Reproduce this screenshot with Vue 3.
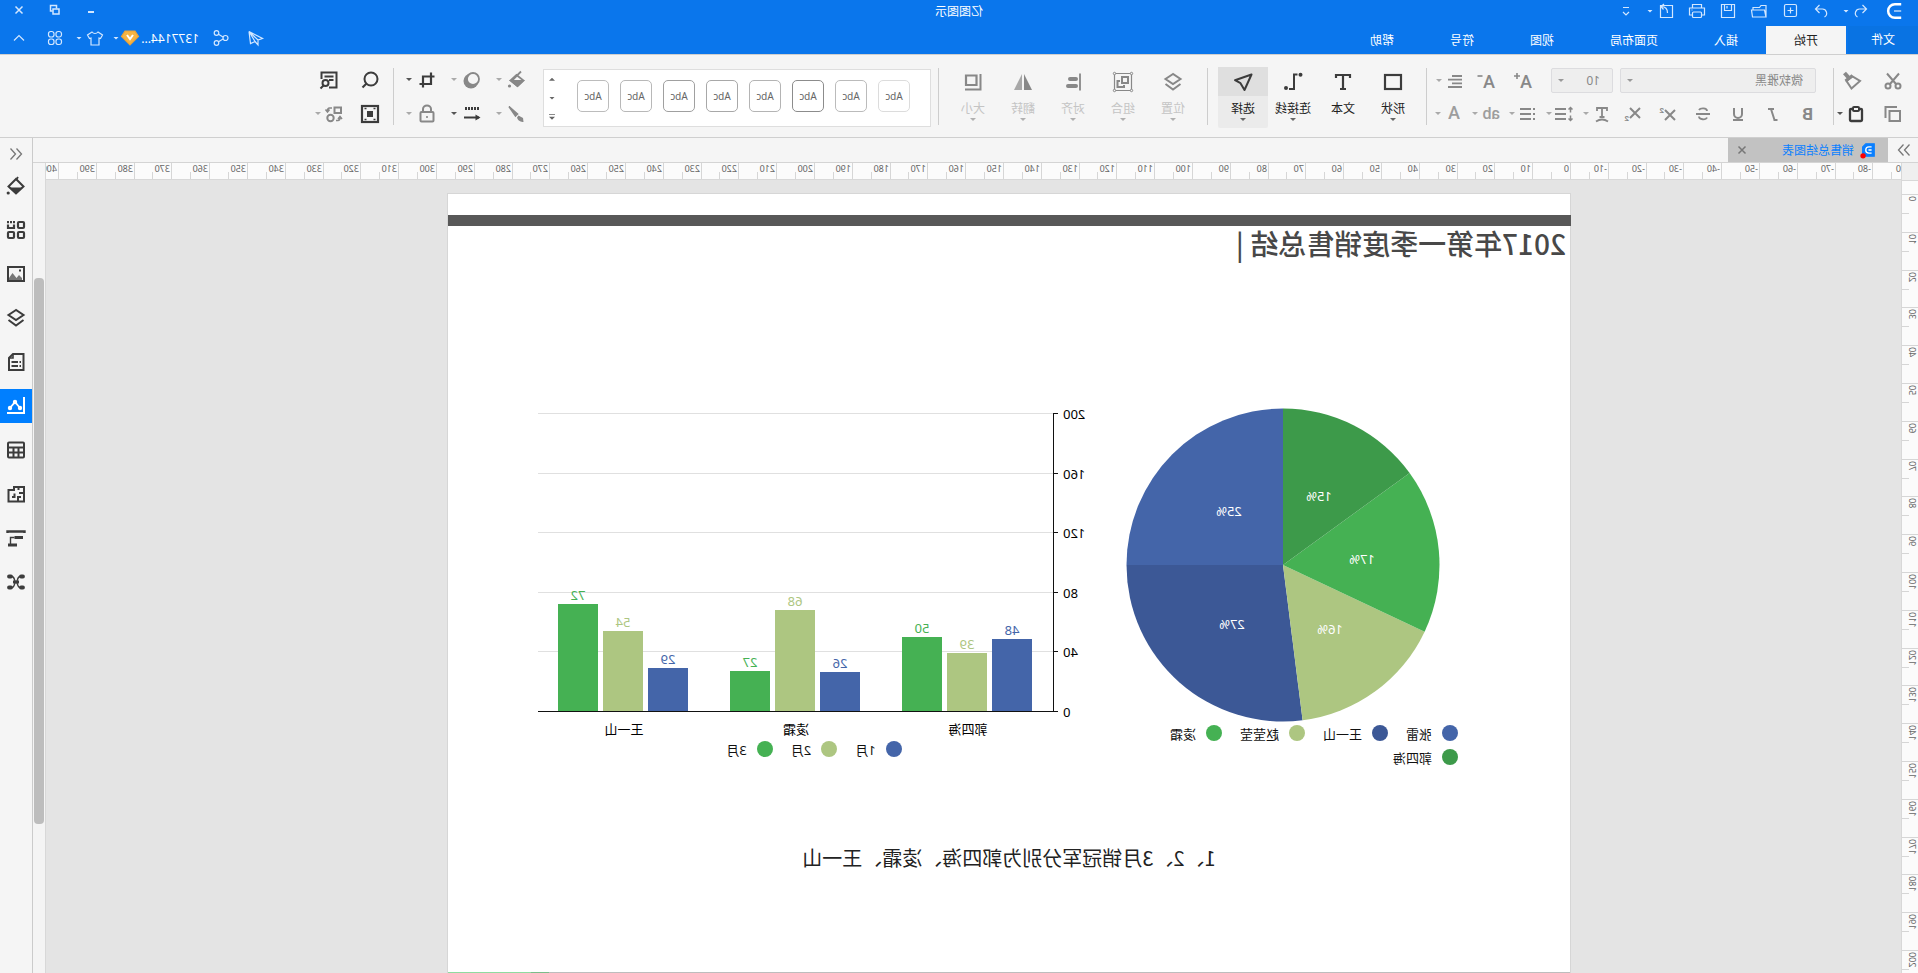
<script setup>
import { ref } from 'vue'

const icons = {
  logo: '<path d="M2 2.500h7a7.500 7.500 0 0 1 0 15H2" stroke-width="2.800"/><path d="M2 10h8" stroke-width="2" opacity=".6"/>',
  undo: '<path d="M8.500 4L4.500 8l4 4M4.500 8H11a4.300 4.300 0 0 1 2.500 8"/>',
  redo: '<path d="M11.500 4l4 4-4 4M15.500 8H9a4.300 4.300 0 0 0-2.500 8"/>',
  plus: '<rect x="3.500" y="3.500" width="12" height="12" rx="1.500"/><path d="M9.500 6.500v6M6.500 9.500h6"/>',
  folder: '<path d="M3 16V4.500h5l1.500 2H16V9M3 16l1.500-7H17.500l-1 7z"/>',
  save: '<path d="M3.500 3.500h13v13h-13zM6.500 3.500v6h7v-6M11 5v2.500"/>',
  print: '<path d="M5.500 7V3.500h9V7M5.500 14h-3V7h15v7h-3"/><rect x="5.500" y="11" width="9" height="5.500" rx="1"/><path d="M14.500 9h1"/>',
  exportIcon: '<path d="M9 4.500H3.500v12h12V12M8.500 12c0-4 2-6.500 6-6.500M12 3l3 2.500L12.500 8.500M9 4.500h6.500V12"/>',
  custom: '<path d="M7 6.500h6M7 11l3 3 3-3"/>',
  min: '<path d="M7 12h6" stroke-width="2"/>',
  restore: '<path d="M6 9h6v5H6z" stroke-width="1.500"/><path d="M8.500 8.500V5.500h6V11H12.500" stroke-width="1.500"/>',
  close: '<path d="M6.500 6.500l7 7M13.500 6.500l-7 7" stroke-width="1.500"/>',
  send: '<path d="M17 3.500L3.500 10.500l4.500 1.500zM17 3.500L15.500 15.500 11 13.500zM8 12v5l3-3.500"/>',
  share: '<circle cx="5.500" cy="10" r="2.500"/><circle cx="14.500" cy="5" r="2.300"/><circle cx="14.500" cy="15" r="2.300"/><path d="M8 9l4.500-2.800M8 11l4.500 2.800"/>',
  gem: '<path d="M5 3h10l3.500 5.500L10 17 1.500 8.500z" fill="#f6b443" stroke="#e9a238"/><path d="M7 7l3 4 3-4" stroke="#fff" stroke-width="2"/>',
  shirt: '<path d="M7 4L2.500 7l2 3.500L6 10v7h8v-7l1.500.500 2-3.500L13 4c-1.500 2-4.500 2-6 0z"/>',
  clover: '<rect x="3.500" y="3.500" width="5.500" height="5.500" rx="2.200"/><rect x="11" y="3.500" width="5.500" height="5.500" rx="2.200"/><rect x="3.500" y="11" width="5.500" height="5.500" rx="2.200"/><rect x="11" y="11" width="5.500" height="5.500" rx="2.200"/>',
  up: '<path d="M5 12.500L10 7.500l5 5"/>',
  cut: '<path d="M4 2.500l9 10.500M16 2.500L7 13" stroke-width="2"/><circle cx="5" cy="15" r="2.500" stroke-width="2"/><circle cx="15" cy="15" r="2.500" stroke-width="2"/>',
  painter: '<path d="M17.500 2l-4 4.500" stroke-width="4"/><path d="M9.500 5.500l6 4.500-5 7.500L2 10z" stroke-width="2"/><path d="M9.500 4.500l7 5.500" stroke-width="3"/>',
  copy: '<rect x="3" y="7" width="10.500" height="10" stroke-width="2"/><path d="M6 3h11.500v11" stroke-width="2"/>',
  paste: '<rect x="4" y="5" width="12" height="12" rx="1" stroke-width="2.300"/><rect x="7" y="3" width="6" height="4" rx="1" stroke-width="2" fill="#f5f5f5"/>',
  fontUp: '<text x="2" y="17" font-size="18" font-weight="500">A</text><path d="M14 5h6M17 2v6" stroke-width="1.600"/>',
  fontDown: '<text x="2" y="17" font-size="18" font-weight="500">A</text><path d="M14.500 5h5" stroke-width="1.600"/>',
  align: '<path d="M3 5h10M3 8.700h14M3 12.300h10M3 16h14" stroke-width="1.800"/>',
  bold: '<text x="5" y="16" font-size="17" font-weight="700">B</text>',
  italic: '<path d="M9 5h6M12 5L8.500 16M5.500 16h4" stroke-width="2"/>',
  under: '<path d="M6 4v6a4 4 0 0 0 8 0V4M5 16h10" stroke-width="2"/>',
  strike: '<path d="M14 6c-1-2-8-2.500-8 1M6 13.500c1 2.500 8 2.500 8-1M3 10h14" stroke-width="1.800"/>',
  sup: '<path d="M3 6l10 10M13 6L3 16" stroke-width="2"/><text x="14" y="9" font-size="8" font-weight="700">2</text>',
  sub: '<path d="M3 4l10 10M13 4L3 14" stroke-width="2"/><text x="14" y="17" font-size="8" font-weight="700">2</text>',
  textT: '<path d="M5 7V4h10v3M10 4v9M7.500 13h5M4 17.500q6-4 12 0" stroke-width="1.800"/>',
  spacing: '<path d="M9 5h11M9 10h11M9 15h11" stroke-width="2"/><path d="M4.500 3.500v5M2.500 5.500l2-2 2 2M4.500 16.500v-5M2.500 14.500l2 2 2-2" stroke-width="1.500"/>',
  list: '<path d="M7 5h11M7 10h11M7 15h11" stroke-width="2"/><path d="M3 5h2M3 10h2M3 15h2" stroke-width="2"/>',
  ab: '<text x="1" y="15" font-size="16" font-weight="500" opacity=".8">ab</text>',
  colorA: '<text x="4" y="15" font-size="18" font-weight="500" opacity=".8">A</text>',
  shape: '<rect x="2" y="3" width="16" height="14" stroke-width="2.200"/>',
  text: '<path d="M3 6V3h14v3M10 3v14M7 17h6" stroke-width="2.200"/>',
  connector: '<path d="M5.500 2.500H9V17h5" stroke-width="2"/><circle cx="2.500" cy="2.800" r="2" fill="currentColor" stroke="none"/><circle cx="17" cy="16" r="2" fill="currentColor" stroke="none"/>',
  select: '<path d="M1.500 2.500L18 8.200l-5.500 3L8.500 18z" stroke-width="2" stroke-linejoin="round"/>',
  position: '<path d="M10 2l7.500 5-7.500 5-7.500-5z" stroke-width="2"/><path d="M2.500 12l7.500 5.500 7.500-5.500" stroke-width="2"/>',
  group: '<path d="M1.500 1.500h17v17h-17z" stroke-width="1.200"/><g fill="#f5f5f5" stroke-width="1"><circle cx="1.500" cy="1.500" r="1.200"/><circle cx="18.500" cy="1.500" r="1.200"/><circle cx="1.500" cy="18.500" r="1.200"/><circle cx="18.500" cy="18.500" r="1.200"/></g><path d="M5 5h6v6H5zM13 9h2.500v6H9v-2" stroke-width="2"/>',
  alignObj: '<path d="M3 1.500v17" stroke-width="1.800"/><path d="M7 7h6M7 14h8" stroke-width="4" stroke-linecap="round"/>',
  flip: '<path d="M9 2v16H1z" fill="currentColor" stroke="none"/><path d="M11 2v16h8z" fill="currentColor" stroke="none" opacity=".7"/>',
  size: '<path d="M6.500 3.500h10.500v9.500H6.500z" stroke-width="2.200"/><path d="M2.500 2v15.500H18" stroke-width="2"/>',
  fill: '<path d="M6 1.500l9 9" stroke-width="1.800"/><path d="M10.500 5l6 5.500L9.500 16 3.500 10.500z" stroke-width="1.800"/><path d="M3.500 10.500h13L9.500 16.500z" fill="currentColor"/><circle cx="17.500" cy="16" r="1.600" fill="currentColor" stroke="none"/>',
  bucket: '<path d="M8 1l2 3" stroke-width="1.800"/><path d="M10 3l7.500 7.500-7.500 7L2.500 10.500z" stroke-width="2"/><path d="M4.500 12h11L10 17.500z" fill="currentColor"/><circle cx="17.800" cy="17" r="1.600" fill="currentColor" stroke="none"/>',
  pen: '<path d="M18 2.500L9.500 10l2 2z" fill="currentColor" stroke-width="1.600"/><path d="M8.500 11.500l-4.500 2.500-.500 4c2.500 0 5.500-1 6.500-4.500z" fill="currentColor" stroke="none"/>',
  ring: '<circle cx="11" cy="11" r="7.500" fill="currentColor" stroke="none"/><circle cx="9" cy="9" r="6" fill="#f5f5f5" stroke-width="1.800"/>',
  crop: '<path d="M14 17.500V6.500H2.500M17.500 14H6V2.500" stroke-width="2.200"/>',
  lines: '<path d="M3 4.500h15" stroke-width="3" stroke-dasharray="2 1"/><path d="M3 13.500h15" stroke-width="2"/><path d="M6.500 10.500v6L1.500 13.500z" fill="currentColor" stroke="none"/>',
  lock: '<rect x="3.500" y="8" width="13" height="9.500" rx="1" stroke-width="2"/><path d="M6 8V5a4 3.500 0 0 1 8 0v3" stroke-width="2"/><path d="M10 12v2" stroke-width="1.600"/>',
  search: '<circle cx="9" cy="9" r="6.500" stroke-width="2"/><path d="M13.500 13.500l4 4" stroke-width="2.200"/>',
  findDoc: '<path d="M10 17.500H2.500v-15h15V9M5.500 6.500h9M5.500 10H10" stroke-width="2"/><circle cx="13.500" cy="13" r="3" stroke-width="2"/><path d="M15.500 15.500l3 3" stroke-width="2"/>',
  fit: '<rect x="2" y="2" width="16" height="16" stroke-width="2.200"/><path d="M7 7h6v6H7z" fill="currentColor" stroke="none"/><path d="M4.500 4.500h2M13.500 4.500h2M4.500 15.500h2M13.500 15.500h2" stroke-width="1.500"/>',
  convert: '<path d="M3 3.500h6.500V9H3z" stroke-width="2"/><circle cx="13.500" cy="14" r="3.200" stroke-width="2"/><path d="M12 4h2.500c1.500 0 2 1 2 3M14.500 5.500l2 2.500 2-2.500M8 16.500H6c-1.500 0-2-1-2-3M2 15l2-2.500L6 15" stroke-width="1.600"/>',
  left2: '<path d="M9.500 4.500L4.500 10l5 5.500M15.500 4.500l-5 5.500 5 5.500" stroke-width="1.300"/>',
  right2: '<path d="M4.500 4.500l5 5.500-5 5.500M10.500 4.500l5 5.500-5 5.500" stroke-width="1.300"/>',
  doc: '<path d="M3 3h9.500l3.500 3.500V17H3z" fill="#0a7fff" stroke="#0a7fff"/><path d="M6 6.500h3a3.300 3.300 0 0 1 0 7H6M6 10h3.500" stroke="#fff" stroke-width="1.500"/><circle cx="15.500" cy="16.500" r="3" fill="#f00" stroke="none"/>',
  squares: '<g stroke-width="2.200"><rect x="2" y="2" width="6" height="6" rx="1"/><path d="M12 4.500V8h6V4.500"/><path d="M11 2.200h2M14 2.200h2M17 2.200h2"/><rect x="2" y="12" width="6" height="6" rx="1"/><rect x="12" y="12" width="6" height="6" rx="1"/></g>',
  image: '<rect x="2" y="3" width="16" height="14" stroke-width="2"/><path d="M4 16v-2l3-3 2.500 3 4-5 3.500 5v2z" fill="#777" stroke="none"/><path d="M5 6.500h2" stroke-width="1.800"/>',
  page: '<path d="M2.500 2h10.500l4 4v12H2.500z" stroke-width="2"/><path d="M13 2v4h4" stroke-width="1.600"/><path d="M5 10h1.500M8 10h6.500M5 14h1.500M8 14h6.500" stroke-width="1.800"/>',
  chart: '<path d="M2 1v16h17" stroke-width="2"/><path d="M6 12l5-6 5 6" stroke-width="1.800"/><g fill="currentColor" stroke="none"><circle cx="6" cy="12" r="2.200"/><circle cx="11" cy="6" r="2.200"/><circle cx="16" cy="12" r="2.200"/></g>',
  table: '<rect x="2" y="2.500" width="16" height="15" rx="1" stroke-width="2"/><path d="M2 7.500h16M2 12.500h16M7.500 7.500v10M12.500 7.500v10" stroke-width="2"/>',
  plan: '<path d="M2 3h10v3h5.500v11.500H2zM2 9h5M7.500 3v3M8 12v5.500M11.500 9.500V13H14M5 13h3" stroke-width="2"/>',
  gantt: '<path d="M1.500 5V3.500h17V5" stroke-width="2.400"/><path d="M3 9.500h8.500M9 17h9" stroke-width="2.800"/><path d="M11.500 9.500h4v7" stroke-width="1.400"/>',
  mind: '<g stroke-width="3.800" stroke-linecap="round"><path d="M3 4.500h2M15 4.500h2M3 15.500h2M15 15.500h2"/></g><path d="M6 4.500c3 0 2 5.500 4 5.500s1-5.500 4-5.500M6 15.500c3 0 2-5.500 4-5.500s1 5.500 4 5.500" stroke-width="1.400"/><path d="M7 10h6" stroke-width="3"/>',
}

const menu = ['插入', '页面布局', '视图', '符号', '帮助']
const quick = [
  ['plus', '新建'], ['folder', '打开'], ['save', '保存'], ['print', '打印'],
]
const tools = [
  ['shape', '形状', true], ['text', '文本', false], ['connector', '连接线', true], ['select', '选择', true],
]
const arrange = [
  ['position', '位置'], ['group', '组合'], ['alignObj', '对齐'], ['flip', '翻转'], ['size', '大小'],
]
const formats = [
  ['bold', '加粗'], ['italic', '斜体'], ['under', '下划线'], ['strike', '删除线'], ['sup', '上标'], ['sub', '下标'],
]
const formatMenus = [
  ['textT', '文字方向'], ['spacing', '行距'], ['list', '项目符号'], ['ab', '突出显示'], ['colorA', '字体颜色'],
]
const presets = ['#dcdcdc', '#bbbbbb', '#8c8c8c', '#b4b4b4', '#a8a8a8', '#a0a0a0', '#b8b8b8', '#bcbcbc']
const side = [
  ['bucket', '填充'], ['squares', '符号库'], ['image', '图片'], ['position', '图层'], ['page', '页面'],
  ['chart', '图表'], ['table', '表格'], ['plan', '平面图'], ['gantt', '甘特图'], ['mind', '思维导图'],
]
const activeSide = ref('chart')
const font = ref('微软雅黑')
const fontSize = ref('10')

const PITCH = 37.8
const hTicks = Array.from({ length: 50 }, (_, i) => (i - 9) * 10).map(v => ({ v, x: Math.round(330 + v / 10 * PITCH) }))
const vTicks = Array.from({ length: 21 }, (_, i) => i * 10).map(v => ({ v, y: Math.round(13 + v / 10 * PITCH) }))

const people = [
  { name: '张雷', pct: 25, color: '#4465a9', x: 229, y: 104 },
  { name: '王一山', pct: 27, color: '#3c5896', x: 226, y: 217 },
  { name: '赵莹莹', pct: 16, color: '#adc681', x: 128, y: 222 },
  { name: '凌霜', pct: 17, color: '#45b153', x: 96, y: 152 },
  { name: '郭四海', pct: 15, color: '#3d9a4a', x: 139, y: 89 },
]
const CX = 175, CY = 158, R = 156.5
let acc = 0
const slices = people.map(p => {
  const at = t => {
    const a = t / 100 * Math.PI * 2
    return `${(CX + R * Math.sin(a)).toFixed(2)} ${(CY - R * Math.cos(a)).toFixed(2)}`
  }
  const d = `M${CX} ${CY}L${at(acc)}A${R} ${R} 0 0 1 ${at(acc + p.pct)}Z`
  acc += p.pct
  return { ...p, d }
})

const months = [
  { name: '1月', color: '#4465a9' }, { name: '2月', color: '#adc681' }, { name: '3月', color: '#45b153' },
]
const sales = [
  { name: '郭四海', values: [48, 39, 50] },
  { name: '凌霜', values: [26, 68, 27] },
  { name: '王一山', values: [29, 54, 72] },
]
const BASE = 304, UNIT = 1.49, AX = 40
const levels = [0, 40, 80, 120, 160, 200].map(v => ({ v, y: Math.round(BASE - v * UNIT) + 0.5 }))
const bars = sales.flatMap((s, i) => s.values.map((v, j) => ({
  v, color: months[j].color, x: AX + i * 172 + 22 + j * 45, y: Math.round(BASE - v * UNIT), h: Math.round(v * UNIT),
})))
</script>

<template>
  <div class="app">
    <header class="top">
      <div class="titlebar">
        <div class="quick">
          <svg class="ic logo" viewBox="0 0 20 20" v-html="icons.logo" />
          <button class="ib undo" aria-label="撤销"><svg class="ic" viewBox="0 0 20 20" v-html="icons.undo" /></button>
          <i class="caret" />
          <button class="ib redo" aria-label="重做"><svg class="ic" viewBox="0 0 20 20" v-html="icons.redo" /></button>
          <button v-for="q in quick" :key="q[0]" class="ib q" :aria-label="q[1]"><svg class="ic" viewBox="0 0 20 20" v-html="icons[q[0]]" /></button>
          <button class="ib q" aria-label="导出"><svg class="ic" viewBox="0 0 20 20" v-html="icons.exportIcon" /></button>
          <i class="caret" />
          <button class="ib q" aria-label="自定义"><svg class="ic" viewBox="0 0 20 20" v-html="icons.custom" /></button>
        </div>
        <span class="appname">亿图图示</span>
        <div class="win">
          <button class="ib" aria-label="最小化"><svg class="ic" viewBox="0 0 20 20" v-html="icons.min" /></button>
          <button class="ib" aria-label="还原"><svg class="ic" viewBox="0 0 20 20" v-html="icons.restore" /></button>
          <button class="ib" aria-label="关闭"><svg class="ic" viewBox="0 0 20 20" v-html="icons.close" /></button>
        </div>
      </div>
      <nav class="menubar">
        <button class="file">文件</button>
        <button class="tab on">开始</button>
        <button v-for="m in menu" :key="m" class="tab">{{ m }}</button>
        <div class="account">
          <button class="ib" aria-label="发送"><svg class="ic" viewBox="0 0 20 20" v-html="icons.send" /></button>
          <button class="ib share" aria-label="分享"><svg class="ic" viewBox="0 0 20 20" v-html="icons.share" /></button>
          <button class="user">1377144...</button>
          <svg class="ic" viewBox="0 0 20 20" v-html="icons.gem" />
          <i class="caret" />
          <button class="ib shirt" aria-label="主题"><svg class="ic" viewBox="0 0 20 20" v-html="icons.shirt" /></button>
          <i class="caret" />
          <button class="ib clover" aria-label="应用"><svg class="ic" viewBox="0 0 20 20" v-html="icons.clover" /></button>
          <button class="ib fold" aria-label="收起"><svg class="ic" viewBox="0 0 20 20" v-html="icons.up" /></button>
        </div>
      </nav>
    </header>

    <section class="ribbon">
      <div class="rows clip">
        <div class="row cliprow1">
          <button class="ib" aria-label="剪切"><svg class="ic" viewBox="0 0 20 20" v-html="icons.cut" /></button>
          <button class="ib" aria-label="格式刷"><svg class="ic" viewBox="0 0 20 20" v-html="icons.painter" /></button>
        </div>
        <div class="row cliprow2">
          <button class="ib" aria-label="复制"><svg class="ic" viewBox="0 0 20 20" v-html="icons.copy" /></button>
          <button class="ib drop dark" aria-label="粘贴"><svg class="ic" viewBox="0 0 20 20" v-html="icons.paste" /><i class="caret" /></button>
        </div>
      </div>
      <i class="sep" />
      <div class="rows font">
        <div class="row r1">
          <label class="pick family"><select v-model="font" aria-label="字体"><option>微软雅黑</option></select><i class="caret" /></label>
          <label class="pick num"><select v-model="fontSize" aria-label="字号"><option>10</option></select><i class="caret" /></label>
          <div class="fontbtns">
            <button class="ib" aria-label="增大字号"><svg class="ic" viewBox="0 0 20 20" v-html="icons.fontUp" /></button>
            <button class="ib" aria-label="减小字号"><svg class="ic" viewBox="0 0 20 20" v-html="icons.fontDown" /></button>
          </div>
          <button class="ib drop" aria-label="对齐方式"><svg class="ic" viewBox="0 0 20 20" v-html="icons.align" /><i class="caret" /></button>
        </div>
        <div class="row r2">
          <div class="marks">
            <button v-for="f in formats" :key="f[0]" class="ib" :aria-label="f[1]"><svg class="ic" viewBox="0 0 20 20" v-html="icons[f[0]]" /></button>
          </div>
          <div class="markmenus">
            <button v-for="f in formatMenus" :key="f[0]" class="ib drop" :aria-label="f[1]"><svg class="ic" viewBox="0 0 20 20" v-html="icons[f[0]]" /><i class="caret" /></button>
          </div>
        </div>
      </div>
      <i class="sep" />
      <div class="bigs">
        <button v-for="t in tools" :key="t[0]" class="big" :class="{ picked: t[0] === 'select' }">
          <span class="pic"><svg class="ic" viewBox="0 0 20 20" v-html="icons[t[0]]" /></span>
          <span class="cap">{{ t[1] }}</span>
          <i v-if="t[2]" class="caret" />
        </button>
      </div>
      <i class="sep" />
      <div class="bigs off">
        <button v-for="t in arrange" :key="t[0]" class="big">
          <span class="pic"><svg class="ic" viewBox="0 0 20 20" v-html="icons[t[0]]" /></span>
          <span class="cap">{{ t[1] }}</span>
          <i class="caret" />
        </button>
      </div>
      <i class="sep" />
      <div class="gallery">
        <button v-for="(c, i) in presets" :key="i" class="preset" :style="{ borderColor: c }">Abc</button>
        <div class="spin">
          <button aria-label="上一行"><i class="caret flipup" /></button>
          <button aria-label="下一行"><i class="caret" /></button>
          <button aria-label="更多样式"><i class="caret more" /></button>
        </div>
      </div>
      <div class="rows style">
        <div class="row">
          <button class="ib drop" aria-label="填充"><svg class="ic" viewBox="0 0 20 20" v-html="icons.fill" /><i class="caret" /></button>
          <button class="ib drop" aria-label="阴影"><svg class="ic" viewBox="0 0 20 20" v-html="icons.ring" /><i class="caret" /></button>
          <button class="ib drop dark" aria-label="裁剪"><svg class="ic" viewBox="0 0 20 20" v-html="icons.crop" /><i class="caret" /></button>
        </div>
        <div class="row">
          <button class="ib drop" aria-label="线条"><svg class="ic" viewBox="0 0 20 20" v-html="icons.pen" /><i class="caret" /></button>
          <button class="ib drop dark" aria-label="线型"><svg class="ic" viewBox="0 0 20 20" v-html="icons.lines" /><i class="caret" /></button>
          <button class="ib drop" aria-label="锁定"><svg class="ic" viewBox="0 0 20 20" v-html="icons.lock" /><i class="caret" /></button>
        </div>
      </div>
      <i class="sep" />
      <div class="rows find">
        <div class="row f1">
          <button class="ib dark" aria-label="查找"><svg class="ic" viewBox="0 0 20 20" v-html="icons.search" /></button>
          <button class="ib dark" aria-label="页面查找"><svg class="ic" viewBox="0 0 20 20" v-html="icons.findDoc" /></button>
        </div>
        <div class="row f2">
          <button class="ib dark" aria-label="适合窗口"><svg class="ic" viewBox="0 0 20 20" v-html="icons.fit" /></button>
          <button class="ib drop" aria-label="替换形状"><svg class="ic" viewBox="0 0 20 20" v-html="icons.convert" /><i class="caret" /></button>
        </div>
      </div>
    </section>

    <div class="body">
      <main class="work">
        <div class="docs">
          <button class="ib expand" aria-label="展开"><svg class="ic" viewBox="0 0 20 20" v-html="icons.right2" /></button>
          <div class="doctab">
            <svg class="ic" viewBox="0 0 20 20" v-html="icons.doc" />
            <a href="#">销售总结图表</a>
            <button class="ib" aria-label="关闭文档"><svg class="ic" viewBox="0 0 20 20" v-html="icons.close" /></button>
          </div>
        </div>
        <div class="stage">
          <div class="corner" />
          <svg class="hruler">
            <g v-for="t in hTicks" :key="t.v">
              <path :d="`M${t.x + 0.5} 0V16M${t.x + 19.5} 9V16`" />
              <text :x="t.x + 2" y="9">{{ t.v }}</text>
            </g>
          </svg>
          <div class="cap-end" />
          <svg class="vruler">
            <g v-for="t in vTicks" :key="t.v">
              <path :d="`M0 ${t.y + 0.5}H16M9 ${t.y + 19.5}H16`" />
              <text :transform="`translate(9 ${t.y + 2}) rotate(-90)`" text-anchor="end">{{ t.v }}</text>
            </g>
          </svg>
          <div class="canvas">
            <article class="sheet">
              <div class="band" />
              <h1>2017年第一季度销售总结 |</h1>
              <div class="charts">
                <figure class="pie">
                  <svg width="350" height="314">
                    <path v-for="s in slices" :key="s.name" :d="s.d" :fill="s.color" />
                    <text v-for="s in slices" :key="s.pct" :x="s.x" :y="s.y + 5" text-anchor="middle">{{ s.pct }}%</text>
                  </svg>
                  <ul class="legend">
                    <li v-for="p in people" :key="p.name"><i :style="{ background: p.color }" />{{ p.name }}</li>
                  </ul>
                </figure>
                <figure class="cols">
                  <svg width="560" height="332">
                    <g v-for="l in levels" :key="l.v">
                      <path v-if="l.v" class="grid" :d="`M40 ${l.y}H556`" />
                      <path class="axis" :d="`M36 ${l.y}H41`" />
                      <text x="31" :y="l.y + 5" text-anchor="end">{{ l.v }}</text>
                    </g>
                    <g v-for="b in bars" :key="b.x">
                      <rect :x="b.x" :y="b.y" width="40" :height="b.h" :fill="b.color" />
                      <text :x="b.x + 20" :y="b.y - 4" :fill="b.color" text-anchor="middle">{{ b.v }}</text>
                    </g>
                    <path class="axis" d="M40.500 6V304.500H556" />
                    <text v-for="(s, i) in sales" :key="s.name" :x="126 + i * 172" y="327" text-anchor="middle">{{ s.name }}</text>
                  </svg>
                  <ul class="legend">
                    <li v-for="m in months" :key="m.name"><i :style="{ background: m.color }" />{{ m.name }}</li>
                  </ul>
                </figure>
              </div>
              <p>1、2、3月销冠军分别为郭四海、凌霜、王一山</p>
              <div class="next"><i class="n1" /><i class="n2" /></div>
            </article>
          </div>
          <div class="scroll"><div class="thumb" /></div>
        </div>
      </main>
      <aside class="side">
        <button class="collapse" aria-label="收起面板"><svg class="ic" viewBox="0 0 20 20" v-html="icons.left2" /></button>
        <button v-for="s in side" :key="s[0]" class="panel" :class="{ active: activeSide === s[0] }" :aria-label="s[1]" @click="activeSide = s[0]">
          <svg class="ic" viewBox="0 0 20 20" v-html="icons[s[0]]" />
        </button>
      </aside>
    </div>
  </div>
</template>

<style>
body { margin: 0; overflow: hidden; }
</style>

<style scoped>
.app {
  height: 100vh; display: flex; flex-direction: column; background: #f5f5f5; overflow: hidden;
  font-family: "Noto Sans", "Noto Sans CJK SC", sans-serif; font-size: 12px; color: #333;
  transform: scaleX(-1);
}
* { box-sizing: border-box; }
button { border: 0; background: none; padding: 0; margin: 0; font: inherit; color: inherit; }
.ic { width: 20px; height: 20px; display: block; flex: none; fill: none; stroke: currentColor; stroke-width: 1.2; overflow: visible; }
.ic :deep(text) { fill: currentColor; stroke: none; font-family: Roboto, "Liberation Sans", sans-serif; }
.ib { display: flex; align-items: center; height: 20px; flex: none; }
.caret { display: block; width: 6px; height: 3px; flex: none; background: currentColor; clip-path: polygon(0 0, 100% 0, 50% 100%); }

.top { background: #0a76ec; color: #d3e7ff; flex: none; }
.titlebar { height: 26px; display: grid; grid-template-columns: 1fr auto 1fr; }
.quick { display: flex; align-items: center; padding-left: 15px; height: 22px; }
.logo { width: 18px; height: 18px; color: #fff; }
.undo { margin-left: 14px; }
.undo + .caret { margin-left: 2px; }
.redo { margin-left: 12px; }
.q { margin-left: 11px; }
.q + .caret { margin-left: 3px; }
.appname { color: #fff; line-height: 23px; }
.win { display: flex; align-items: center; justify-content: flex-end; height: 20px; gap: 16px; padding-right: 9px; }
.menubar { display: flex; align-items: stretch; height: 28px; color: #fff; }
.file { width: 70px; margin-right: 2px; background: #0973e3; line-height: 26px; }
.tab { padding: 0 28px; }
.tab.on { background: #f5f5f5; color: #222; }
.account { margin-left: auto; display: flex; align-items: center; padding-right: 9px; height: 24px; color: #d3e7ff; }
.share { margin: 0 12px 0 15px; }
.user { width: 59px; text-align: left; color: #fff; }
.account .caret { margin-left: 1px; }
.shirt { margin-left: 8px; }
.shirt + .caret { margin-left: 3px; }
.clover { margin: 0 16px 0 11px; }

.ribbon { height: 84px; flex: none; display: flex; align-items: flex-start; border: solid #cfcfcf; border-width: 1px 0; color: #888; }
.sep { width: 1px; height: 57px; margin-top: 13px; background: #cdcdcd; flex: none; }
.rows { padding-top: 9px; flex: none; }
.row { height: 33px; display: flex; align-items: center; }
.drop { gap: 3px; }
.drop .caret { color: #aaa; }
.dark { color: #3c3c3c; }
.dark .caret { color: #555; }
.clip { width: 84px; padding-left: 15px; }
.cliprow1 { gap: 21px; }
.cliprow2 { gap: 17px; }
.r1 { padding-left: 17px; }
.r2 { padding: 0 8px 0 15px; }
.pick { position: relative; display: flex; align-items: center; height: 25px; border: 1px solid #dcdcdf; border-radius: 2px; background: #eee; }
.pick select { appearance: none; border: 0; background: none; width: 100%; height: 100%; padding: 0 20px 0 12px; font: inherit; color: #888; opacity: 1; }
.pick .caret { position: absolute; right: 6px; color: #999; }
.family { width: 196px; margin-right: 7px; }
.num { width: 62px; margin-right: 17px; }
.fontbtns { display: flex; gap: 17px; margin-right: 12px; }
.marks { display: flex; gap: 15px; margin-right: 11px; }
.markmenus { display: flex; gap: 8px; }
.bigs { display: flex; padding: 12px 10px 0 8px; color: #3c3c3c; }
.big { width: 50px; height: 61px; display: flex; flex-direction: column; align-items: center; }
.pic { width: 100%; height: 29px; display: flex; align-items: center; justify-content: center; }
.cap { height: 20px; line-height: 26px; color: #222; white-space: nowrap; }
.big .caret { margin-top: 2px; color: #666; }
.picked { background: #ebebeb; border-radius: 2px; }
.picked .pic { background: #dfdfdf; }
.off { padding: 12px 9px 0; color: #888; }
.off .cap { color: #c4c4c4; }
.off .caret { color: #b0b0b0; }
.gallery { display: flex; align-items: flex-start; gap: 11px; width: 388px; height: 58px; margin: 14px 0 0 7px; padding-left: 20px; border: 1px solid #dedede; background: #fff; }
.preset { width: 32px; height: 32px; margin-top: 10px; flex: none; border: 1px solid; border-radius: 5px; font-size: 10px; color: #666; background: #fff; }
.spin { margin-left: auto; width: 16px; height: 56px; display: flex; flex-direction: column; color: #666; }
.spin button { flex: 1; display: flex; align-items: center; justify-content: center; }
.flipup { clip-path: polygon(50% 0, 100% 100%, 0 100%); }
.more { height: 6px; clip-path: polygon(0 0, 100% 0, 100% 17%, 0 17%, 0 50%, 100% 50%, 50% 100%, 0 50%); }
.style { padding: 8px 12px 0 16px; }
.style .row { gap: 14px; }
.style .drop { gap: 5px; }
.find { padding: 8px 0 0 13px; }
.style .row + .row, .find .row + .row { height: 35px; }
.f1 { gap: 21px; }
.f2 { gap: 16px; }

.body { flex: 1; min-height: 0; display: flex; }
.work { flex: 1; min-width: 0; display: flex; flex-direction: column; }
.docs { height: 25px; flex: none; display: flex; border-bottom: 1px solid #d4d4d4; color: #777; }
.expand { margin: 2px 6px 0 4px; }
.doctab { width: 160px; display: flex; align-items: center; padding: 0 4px 0 11px; background: #c2c2c2; }
.doctab > .ic { width: 18px; height: 18px; }
.doctab a { margin-left: 5px; color: #0a7fff; text-decoration: none; }
.doctab .ib { margin-left: auto; }
.stage { flex: 1; min-height: 0; display: grid; grid-template: 17px minmax(0, 1fr) / 17px minmax(0, 1fr) 13px; }
.corner { background: #efefef; border-right: 1px solid #d8d8d8; }
.hruler { width: 100%; height: 17px; background: #fbfbfb; border-bottom: 1px solid #d8d8d8; overflow: hidden; }
.vruler { width: 17px; height: 100%; background: #fbfbfb; border: solid #d8d8d8; border-width: 1px 1px 0 0; overflow: hidden; }
.hruler path, .vruler path { stroke: #d6d6d6; fill: none; }
.hruler text, .vruler text { font-size: 9px; fill: #666; }
.cap-end { border-left: 1px solid #d8d8d8; }
.canvas { display: flex; background: #e4e4e4; padding: 13px 401px 0 330px; overflow: hidden; }
.scroll { border-left: 1px solid #d8d8d8; background: #f4f4f4; padding: 98px 1px 0; }
.thumb { height: 546px; border-radius: 4px; background: #bdbdbd; }

.sheet { flex: 1; min-width: 0; display: flex; flex-direction: column; background: #fff; border: 1px solid #d6d6d6; border-bottom: 0; color: #111; }
.band { height: 11px; margin: 21px 0 0 -1px; background: #585858; flex: none; }
h1 { margin: 0 0 147px 4px; font-family: "Noto Sans CJK SC", sans-serif; font-size: 28px; line-height: 34px; font-weight: 500; color: #484848; white-space: nowrap; }
.charts { display: flex; gap: 14px; padding-left: 112px; height: 362px; }
figure { margin: 0; font-size: 13px; flex: none; }
figure svg { display: block; overflow: visible; }
.pie { width: 350px; }
.pie text { fill: #fff; }
.legend { list-style: none; margin: 0; padding: 0; display: flex; flex-wrap: wrap; column-gap: 18px; }
.legend li { display: flex; align-items: center; gap: 10px; height: 24px; color: #111; }
.legend i { width: 16px; height: 16px; border-radius: 50%; }
.cols .legend { justify-content: center; }
.cols .legend li { height: 20px; }
.grid { stroke: #e0e0e0; fill: none; }
.axis { stroke: #111; fill: none; }
.sheet p { margin: 74px 0 0; font-family: "Noto Sans CJK SC", sans-serif; text-align: center; font-size: 20px; line-height: 30px; color: #222; }
.next { margin-top: auto; height: 1px; flex: none; display: flex; flex-direction: row-reverse; background: #bdbdbd; }
.n1 { width: 83px; background: #8fdba0; }
.n2 { width: 18px; background: #7cbc8a; }

.side { width: 33px; flex: none; border-left: 1px solid #cbcbcb; display: flex; flex-direction: column; color: #3c3c3c; }
.collapse { height: 31px; display: flex; align-items: center; justify-content: center; color: #777; }
.panel { height: 34px; margin-bottom: 10px; display: flex; align-items: center; justify-content: center; flex: none; }
.panel.active { background: #007fff; color: #fff; }
</style>
